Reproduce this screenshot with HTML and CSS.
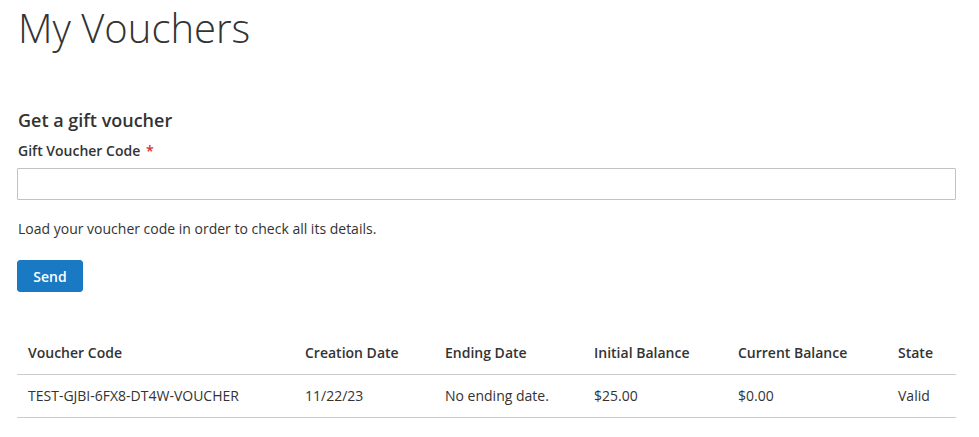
FILE: index.html
```
<!DOCTYPE html>
<html lang="en">
<head>
    <meta charset="UTF-8">
    <meta name="viewport" content="width=device-width, initial-scale=1.0">
    <title>My Vouchers</title>
    <link rel="stylesheet" href="styles.css">
</head>
<body>
    <main class="page">
        <h1 class="page-title">My Vouchers</h1>

        <!-- Voucher lookup form -->
        <form class="voucher-form" onsubmit="return false;">
            <h2 class="legend">Get a gift voucher</h2>
            <label class="label" for="voucher_code">Gift Voucher Code <span class="required">*</span></label>
            <input type="text" id="voucher_code" class="input-text">
            <p class="note">Load your voucher code in order to check all its details.</p>
            <button type="submit" class="btn-primary">Send</button>
        </form>

        <!-- Vouchers list -->
        <table class="voucher-table">
            <thead>
                <tr>
                    <th class="col-code">Voucher Code</th>
                    <th class="col-created">Creation Date</th>
                    <th class="col-ending">Ending Date</th>
                    <th class="col-initial">Initial Balance</th>
                    <th class="col-current">Current Balance</th>
                    <th class="col-state">State</th>
                </tr>
            </thead>
            <tbody>
                <tr>
                    <td>TEST-GJBI-6FX8-DT4W-VOUCHER</td>
                    <td>11/22/23</td>
                    <td>No ending date.</td>
                    <td>$25.00</td>
                    <td>$0.00</td>
                    <td>Valid</td>
                </tr>
            </tbody>
        </table>
    </main>
</body>
</html>
```

FILE: styles.css
```
/* General styling */
body {
    font-family: 'Open Sans', 'Helvetica Neue', Helvetica, Arial, sans-serif;
    font-size: 14px;
    line-height: 20px;
    color: #333;
    background-color: #fff;
    margin: 0;
    padding: 0;
}

.page {
    width: 939px;
    padding: 0 23px 0 17px;
}

.page-title {
    font-size: 40px;
    font-weight: 300;
    line-height: 44px;
    margin: 6px 0 0 1px;
}

.voucher-form {
    margin-top: 58px;
}

.legend {
    font-size: 18px;
    font-weight: 600;
    line-height: 24px;
    margin: 0 0 9px 1px;
}

.label {
    display: block;
    font-weight: 600;
    margin-left: 1px;
    margin-bottom: 7px;
}

.required {
    color: #e02b27;
    margin-left: 2px;
}

.input-text {
    display: block;
    box-sizing: border-box;
    width: 100%;
    height: 32px;
    margin: 0;
    padding: 0 9px;
    border: 1px solid #c2c2c2;
    border-radius: 1px;
    font-family: inherit;
    font-size: 14px;
    background: #fff;
}

.note {
    margin: 19px 0 21px 1px;
}

.btn-primary {
    display: block;
    width: 66px;
    height: 32px;
    padding: 0;
    margin: 0;
    background-color: #1979c3;
    border: 1px solid #1979c3;
    border-radius: 3px;
    color: #fff;
    font-family: inherit;
    font-size: 14px;
    font-weight: 600;
    cursor: pointer;
}

.btn-primary:hover {
    background-color: #006bb4;
}

/* Vouchers table */
.voucher-table {
    width: 100%;
    margin-top: 40px;
    border-collapse: collapse;
    table-layout: fixed;
}

.voucher-table th,
.voucher-table td {
    box-sizing: border-box;
    text-align: left;
    padding: 11px 10px 11px 11px;
    vertical-align: top;
}

.voucher-table th {
    font-weight: 600;
    border-bottom: 1px solid #ccc;
}

.voucher-table td {
    border-bottom: 1px solid #ccc;
}

.col-code { width: 277px; }
.col-created { width: 140px; }
.col-ending { width: 149px; }
.col-initial { width: 144px; }
.col-current { width: 160px; }
```
